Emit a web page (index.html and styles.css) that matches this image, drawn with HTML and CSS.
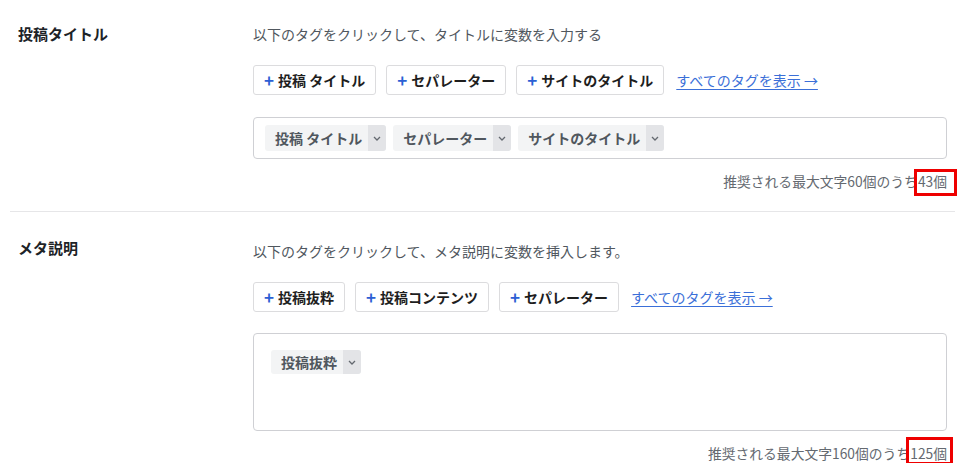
FILE: index.html
```html
<!DOCTYPE html>
<html lang="ja">
<head>
<meta charset="utf-8">
<title>SEO設定</title>
<link rel="stylesheet" href="styles.css">
</head>
<body>
<div class="panel">
  <section class="row row-first">
    <div class="label">投稿タイトル</div>
    <div class="field">
      <p class="desc">以下のタグをクリックして、タイトルに変数を入力する</p>
      <div class="tag-bar">
        <button class="add" type="button"><span class="plus">+</span>投稿 タイトル</button>
        <button class="add" type="button"><span class="plus">+</span>セパレーター</button>
        <button class="add" type="button"><span class="plus">+</span>サイトのタイトル</button>
        <a class="all" href="#">すべてのタグを表示 →</a>
      </div>
      <div class="input">
        <span class="tag"><span class="tag-text">投稿 タイトル</span><span class="caret"><svg width="8" height="5" viewBox="0 0 8 5"><path d="M1 1l3 3 3-3" fill="none" stroke="#646970" stroke-width="1.3"/></svg></span></span>
        <span class="tag"><span class="tag-text">セパレーター</span><span class="caret"><svg width="8" height="5" viewBox="0 0 8 5"><path d="M1 1l3 3 3-3" fill="none" stroke="#646970" stroke-width="1.3"/></svg></span></span>
        <span class="tag"><span class="tag-text">サイトのタイトル</span><span class="caret"><svg width="8" height="5" viewBox="0 0 8 5"><path d="M1 1l3 3 3-3" fill="none" stroke="#646970" stroke-width="1.3"/></svg></span></span>
      </div>
      <div class="count">推奨される最大文字60個のうち<span class="num mark-a">43個</span></div>
    </div>
  </section>
  <hr class="sep">
  <section class="row row-second">
    <div class="label">メタ説明</div>
    <div class="field">
      <p class="desc">以下のタグをクリックして、メタ説明に変数を挿入します。</p>
      <div class="tag-bar">
        <button class="add" type="button"><span class="plus">+</span>投稿抜粋</button>
        <button class="add" type="button"><span class="plus">+</span>投稿コンテンツ</button>
        <button class="add" type="button"><span class="plus">+</span>セパレーター</button>
        <a class="all" href="#">すべてのタグを表示 →</a>
      </div>
      <div class="input textarea">
        <span class="tag"><span class="tag-text">投稿抜粋</span><span class="caret"><svg width="8" height="5" viewBox="0 0 8 5"><path d="M1 1l3 3 3-3" fill="none" stroke="#646970" stroke-width="1.3"/></svg></span></span>
      </div>
      <div class="count">推奨される最大文字160個のうち<span class="num mark-b">125個</span></div>
    </div>
  </section>
</div>
</body>
</html>
```
FILE: styles.css
```css
* { box-sizing: border-box; }

html, body {
  margin: 0;
  padding: 0;
  background: #ffffff;
}

body {
  font-family: "Noto Sans CJK JP", "Noto Sans", sans-serif;
  color: #1e1e1e;
  font-size: 14px;
}

.panel {
  margin: 0 12px 0 10px;
}

.row {
  display: grid;
  grid-template-columns: 235px 1fr;
  padding: 0 8px;
}

.row-first {
  padding-top: 24px;
  padding-bottom: 20px;
}

.row-second {
  padding-top: 29px;
}

.label {
  font-size: 15px;
  font-weight: 700;
  line-height: 20px;
  color: #1d2327;
}

.row-second .label {
  margin-top: -3px;
}

.field {
  display: flex;
  flex-direction: column;
  min-width: 0;
}

.desc {
  margin: 0;
  font-size: 14px;
  line-height: 20px;
  color: #50575e;
}

.tag-bar {
  display: flex;
  align-items: center;
  gap: 10px;
  margin-top: 21px;
}

.add {
  height: 30px;
  padding: 0 10px;
  border: 1px solid #dcdcde;
  border-radius: 3px;
  background: #ffffff;
  font-family: inherit;
  font-size: 14px;
  font-weight: 700;
  color: #1e1e1e;
  display: inline-flex;
  align-items: center;
  line-height: 1;
  cursor: pointer;
}

.plus {
  color: #2c5fd4;
  margin-right: 4px;
  font-size: 17px;
  font-weight: 700;
  line-height: 1;
  position: relative;
  top: -1px;
}

.all {
  margin-left: 2px;
  color: #3b6fd8;
  font-size: 14px;
  line-height: 20px;
  text-decoration: underline;
  text-underline-offset: 3px;
}

.input {
  margin-top: 22px;
  height: 42px;
  border: 1px solid #cfd0d4;
  border-radius: 4px;
  padding: 7px 11px;
  display: flex;
  align-items: flex-start;
  gap: 7px;
}

.textarea {
  margin-top: 21px;
  height: 98px;
  padding: 16px 17px;
}

.tag {
  display: inline-flex;
  height: 26px;
  background: #f3f4f5;
  border-radius: 3px;
  overflow: hidden;
}

.textarea .tag {
  height: 24px;
}

.tag-text {
  display: flex;
  align-items: center;
  padding: 0 6px 0 10px;
  font-size: 14px;
  font-weight: 700;
  color: #50575e;
  line-height: 1;
}

.caret {
  width: 18px;
  display: flex;
  align-items: center;
  justify-content: center;
  background: #e3e4e7;
}

.count {
  margin-top: 12px;
  text-align: right;
  font-size: 13.8px;
  line-height: 20px;
  color: #646970;
}

.num {
  position: relative;
}

.num::after {
  content: "";
  position: absolute;
  border: 3px solid #ee0000;
}

.mark-a::after {
  top: -2px;
  bottom: -5px;
  left: -4px;
  right: -10px;
}

.mark-b::after {
  top: -6px;
  bottom: -2px;
  left: -4px;
  right: -6px;
}

.sep {
  margin: 0;
  border: 0;
  height: 1px;
  background: #e6e6e8;
}
```
